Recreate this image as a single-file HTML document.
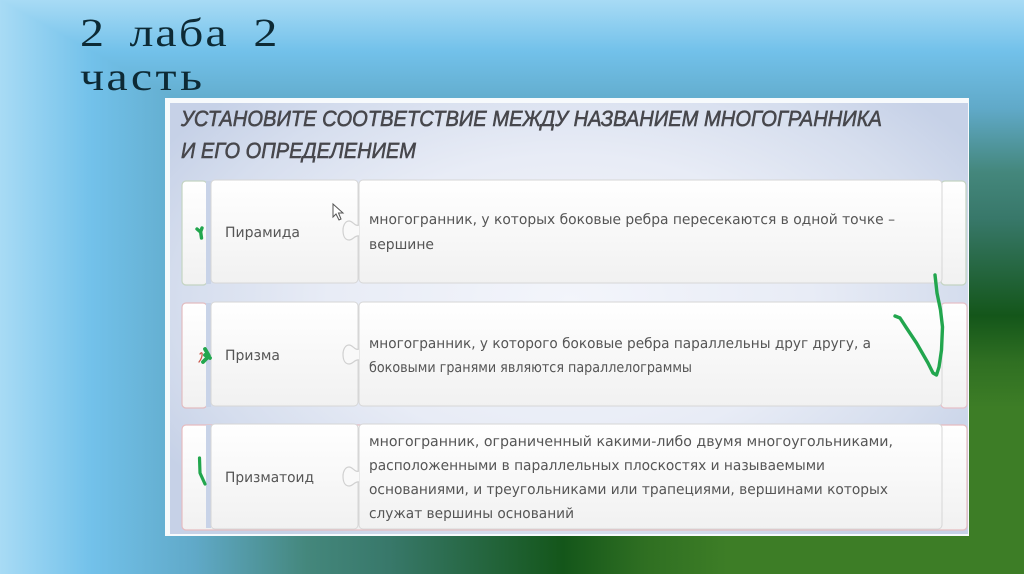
<!DOCTYPE html>
<html lang="ru"><head><meta charset="utf-8"><title>2 лаба 2 часть</title>
<style>
html,body{margin:0;padding:0;width:1024px;height:574px;overflow:hidden;background:#3d7d26}
.bg{position:absolute;left:0;top:0;width:1024px;height:574px}
.v{background:linear-gradient(to bottom,#a8dbf5 0%,#72c1ea 9%,#60a9c8 19%,#44877c 30%,#38786a 38%,#14561a 55%,#2f6f22 63%,#3d7d26 71%,#3d7d26 100%)}
.h{clip-path:polygon(0 0,0 100%,100% 100%);background:linear-gradient(to right,#a8dbf5 0%,#72c1ea 9%,#60a9c8 19%,#44877c 30%,#38786a 38%,#14561a 55%,#2f6f22 63%,#3d7d26 71%,#3d7d26 100%)}
svg{position:absolute;left:0;top:0;text-rendering:geometricPrecision;filter:blur(.3px)}
.t{font-family:"DejaVu Sans","Liberation Sans",sans-serif;font-size:14.2px;fill:#555}
.q{font-family:"Liberation Sans",sans-serif;font-size:22px;font-style:italic;fill:#47474c;stroke:#47474c;stroke-width:.6}
.m{font-family:"Liberation Serif",serif;font-size:40px;fill:#0d2a35;text-anchor:middle}
</style></head><body>
<div class="bg v"></div><div class="bg h"></div>
<svg width="1024" height="574" viewBox="0 0 1024 574" xmlns="http://www.w3.org/2000/svg">
<defs>
<radialGradient id="pg" gradientUnits="userSpaceOnUse" cx="570" cy="300" r="480" gradientTransform="translate(0 120) scale(1 .6)">
<stop offset="0" stop-color="#f3f5fb"/><stop offset=".5" stop-color="#e8ecf6"/><stop offset=".8" stop-color="#d6deee"/><stop offset="1" stop-color="#c6d1e7"/></radialGradient>
<linearGradient id="cg" x1="0" y1="0" x2="0" y2="1"><stop offset="0" stop-color="#fff"/><stop offset="1" stop-color="#f1f1f1"/></linearGradient>
</defs>
<g transform="scale(1.2 1)">
<text class="m" x="76.7 97.5 117.9 138.3 159.2 180 200.4 221.2" y="46">2 лаба 2</text>
<text class="m" x="76.7 97.5 117.9 138.3 159.2" y="90">часть</text>
</g>

<rect x="165" y="98" width="804" height="438" fill="#f7fafc"/>
<rect x="170" y="103" width="798" height="431" fill="url(#pg)"/>

<text class="q" x="181" y="126" textLength="701" lengthAdjust="spacingAndGlyphs">УСТАНОВИТЕ СООТВЕТСТВИЕ МЕЖДУ НАЗВАНИЕМ МНОГОГРАННИКА</text>
<text class="q" x="181" y="158" textLength="235" lengthAdjust="spacingAndGlyphs">И ЕГО ОПРЕДЕЛЕНИЕМ</text>

<g stroke-width="1.2" fill="url(#cg)">
<rect x="182" y="181" width="25" height="104" rx="4" stroke="#c4d4c2"/>
<rect x="941" y="181" width="25" height="104" rx="4" stroke="#c4d4c2"/>
<rect x="182" y="303" width="25" height="105" rx="4" stroke="#e2bcc0"/>
<rect x="941" y="303" width="26" height="105" rx="4" stroke="#e6c0c8"/>
<rect x="182" y="425" width="785" height="105" rx="4" stroke="#e6bcc0"/>
</g>
<rect x="206" y="181" width="5" height="103" fill="#c8d3e8"/>
<rect x="206" y="303" width="5" height="104" fill="#c8d3e8"/>
<rect x="206" y="425" width="5" height="103" fill="#c8d3e8"/>

<g stroke="#d6d6d6" stroke-width="1" fill="url(#cg)">
<rect x="211" y="180" width="147" height="103" rx="4"/>
<rect x="359" y="180" width="583" height="103" rx="4"/>
<rect x="211" y="302" width="147" height="104" rx="4"/>
<rect x="359" y="302" width="583" height="104" rx="4"/>
<rect x="211" y="424" width="147" height="105" rx="4"/>
<rect x="359" y="424" width="583" height="105" rx="4"/>
</g>

<g fill="#f9f9f9" stroke="#d0d0d0" stroke-width="1.2">
<path d="M359,225 C355,227 353,221 349,221 C345,221 343,226 343,230 C343,236 345,240 349,240 C353,240 355,235 359,236"/>
<path d="M359,349 C355,351 353,345 349,345 C345,345 343,350 343,354 C343,360 345,364 349,364 C353,364 355,359 359,360"/>
<path d="M359,471 C355,473 353,467 349,467 C345,467 343,472 343,476 C343,482 345,486 349,486 C353,486 355,481 359,482"/>
</g>

<text class="t" x="225" y="237" textLength="75" lengthAdjust="spacingAndGlyphs">Пирамида</text>
<text class="t" x="225" y="360" textLength="55" lengthAdjust="spacingAndGlyphs">Призма</text>
<text class="t" x="225" y="482" textLength="89" lengthAdjust="spacingAndGlyphs">Призматоид</text>

<text class="t" x="369" y="224" textLength="526" lengthAdjust="spacingAndGlyphs">многогранник, у которых боковые ребра пересекаются в одной точке –</text>
<text class="t" x="369" y="249" textLength="65" lengthAdjust="spacingAndGlyphs">вершине</text>
<text class="t" x="369" y="348" textLength="502" lengthAdjust="spacingAndGlyphs">многогранник, у которого боковые ребра параллельны друг другу, а</text>
<text class="t" x="369" y="372" textLength="323" lengthAdjust="spacingAndGlyphs">боковыми гранями являются параллелограммы</text>
<text class="t" x="369" y="446" textLength="524" lengthAdjust="spacingAndGlyphs">многогранник, ограниченный какими-либо двумя многоугольниками,</text>
<text class="t" x="369" y="470" textLength="456" lengthAdjust="spacingAndGlyphs">расположенными в параллельных плоскостях и называемыми</text>
<text class="t" x="369" y="494" textLength="519" lengthAdjust="spacingAndGlyphs">основаниями, и треугольниками или трапециями, вершинами которых</text>
<text class="t" x="369" y="518" textLength="205" lengthAdjust="spacingAndGlyphs">служат вершины оснований</text>

<path d="M333,204 L333,217 L336,214 L339,220 L341,219 L338.5,213 L343,213 Z" fill="#fff" stroke="#555" stroke-width="1"/>

<g fill="none" stroke-linecap="round" stroke-linejoin="round">
<path d="M200,354 C203,350 203,357 199,362" stroke="#c8574a" stroke-width="1.3"/>
<g stroke="#22a64e">
<path d="M935,275 L937,293 L940.5,310 L942.5,327 L941.5,350 L939,367 L936.5,375 L933,373 L928,363 L916.5,343 L906.5,328 L900,318 L895,316" stroke-width="3.4"/>
<path d="M197,229 L200.5,232 L202,228 M200.5,231 L201.5,238" stroke-width="3.4"/>
<path d="M205,349 L209,356 L203,362 M205,355 L210,358" stroke-width="3.8"/>
<path d="M199.5,458 L200,473 L205,484" stroke-width="3.2"/>
</g>
</g>
</svg>
</body></html>
